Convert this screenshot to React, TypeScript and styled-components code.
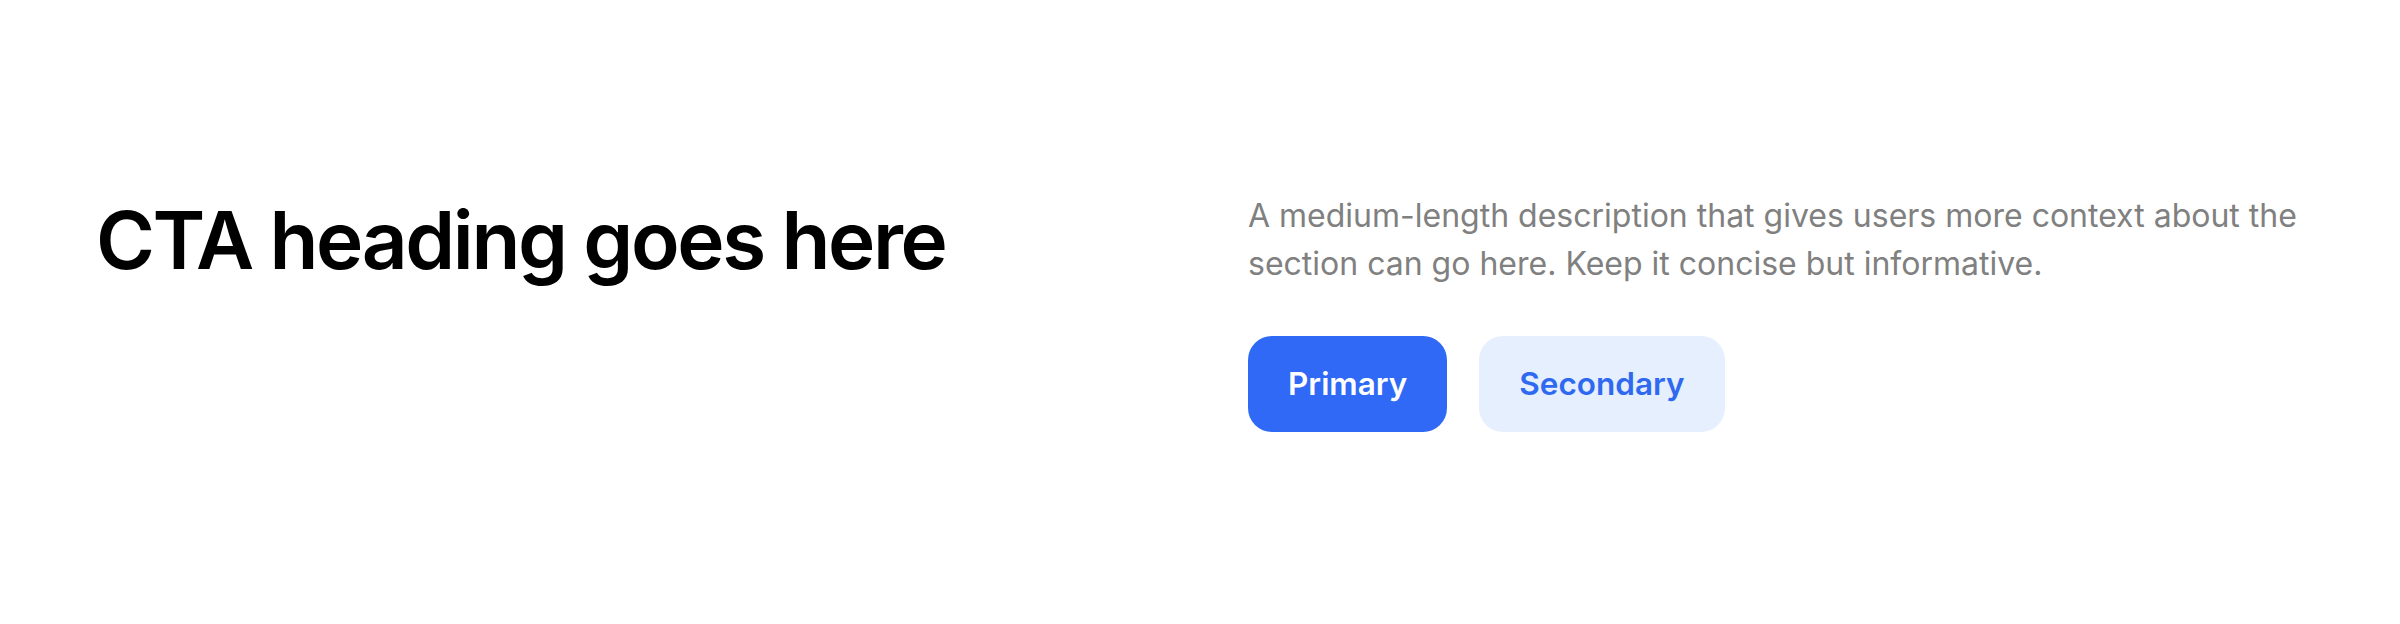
import React from "react";
import styled, { createGlobalStyle } from "styled-components";

const GlobalStyle = createGlobalStyle`
  html, body {
    margin: 0;
    padding: 0;
    background: #ffffff;
  }
  body {
    font-family: Inter, "Noto Sans", "Liberation Sans", sans-serif;
  }
`;

const Section = styled.section`
  height: 624px;
  box-sizing: border-box;
  padding: 0 96px;
  display: flex;
  align-items: center;
`;

const Grid = styled.div`
  width: 100%;
  display: grid;
  grid-template-columns: 1fr 1fr;
  column-gap: 96px;
  align-items: start;
`;

const Heading = styled.h2`
  margin: 0;
  font-size: 80px;
  line-height: 1.2;
  font-weight: 600;
  letter-spacing: -0.03em;
  color: #000000;
`;

const Content = styled.div`
  display: flex;
  flex-direction: column;
  gap: 48px;
`;

const Description = styled.p`
  margin: 0;
  font-size: 32px;
  line-height: 1.5;
  color: #808080;
`;

const Actions = styled.div`
  display: flex;
  gap: 32px;
`;

const Button = styled.button<{ $variant: "primary" | "secondary" }>`
  font-family: inherit;
  font-size: 31.5px;
  line-height: 48px;
  font-weight: 600;
  padding: 24px 40px;
  border: none;
  border-radius: 24px;
  cursor: pointer;
  background: ${({ $variant }) => ($variant === "primary" ? "#2f69f5" : "#e5effe")};
  color: ${({ $variant }) => ($variant === "primary" ? "#ffffff" : "#2f69f0")};
`;

const App = () => {
  return (
    <>
      <GlobalStyle />
      <Section>
        <Grid>
          <Heading>CTA heading goes here</Heading>
          <Content>
            <Description>
              A medium-length description that gives users more context about the section can go here.
              Keep it concise but informative.
            </Description>
            <Actions>
              <Button $variant="primary">Primary</Button>
              <Button $variant="secondary">Secondary</Button>
            </Actions>
          </Content>
        </Grid>
      </Section>
    </>
  );
};

export default App;
